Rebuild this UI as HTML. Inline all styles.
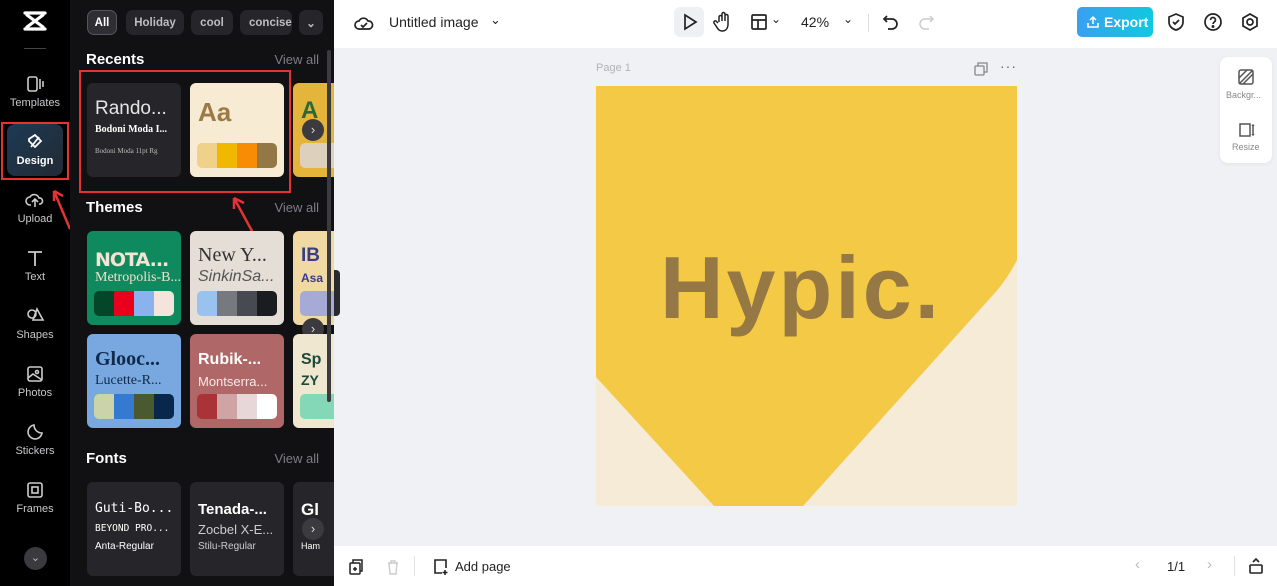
<!DOCTYPE html>
<html><head><meta charset="utf-8"><style>
*{box-sizing:border-box;margin:0;padding:0}
body{width:1277px;height:586px;overflow:hidden;position:relative;font-family:"Liberation Sans",sans-serif;background:#eff1f4}
.a{position:absolute}
.side{left:0;top:0;width:70px;height:586px;background:#000}
.nav{position:absolute;left:0;width:70px;text-align:center;color:#c9c9cc;font-size:11px}
.nav svg{display:block;margin:0 auto 3px}
.panel{left:70px;top:0;width:264px;height:586px;background:#111114;overflow:hidden}
.chip{position:absolute;top:10px;height:25px;border-radius:7px;background:#26262a;color:#bdbdc2;font-size:11.5px;font-weight:bold;display:flex;align-items:center;justify-content:center;white-space:nowrap;overflow:hidden}
.h{position:absolute;left:16px;color:#fff;font-weight:bold;font-size:15px}
.va{position:absolute;right:15px;color:#7d7d84;font-size:13px}
.card{position:absolute;width:94px;height:94px;border-radius:6px;overflow:hidden}
.sw{position:absolute;left:7px;right:7px;top:60px;height:25px;border-radius:5px;overflow:hidden;display:flex}
.sw i{flex:1}
.t1{position:absolute;left:8px;top:18px;font-size:19px;white-space:nowrap}
.t2{position:absolute;left:8px;top:42px;font-size:14px;white-space:nowrap}
.arr{position:absolute;width:22px;height:22px;border-radius:50%;background:#3a3a3f;color:#ddd;font-size:13px;text-align:center;line-height:21px}
.top{left:334px;top:0;width:943px;height:48px;background:#fff}
.bot{left:334px;top:546px;width:943px;height:40px;background:#fff}
</style></head><body>
<div class="a side">
 <svg class="a" style="left:22px;top:9px" width="26" height="24" viewBox="0 0 26 24"><path d="M3 4h20M3 20h20M5 6l16 12M21 6L5 18" fill="none" stroke="#fff" stroke-width="3.2" stroke-linecap="round"/></svg>
 <div class="a" style="left:24px;top:48px;width:22px;height:1px;background:#444"></div>
 <div class="nav" style="top:74px"><svg width="20" height="20" viewBox="0 0 20 20" fill="none" stroke="#ccc" stroke-width="1.6"><rect x="3" y="3" width="9" height="14" rx="2"/><path d="M15 5v10M18 7v6"/></svg>Templates</div>
 <div class="a" style="left:7px;top:124px;width:56px;height:52px;border-radius:8px;background:linear-gradient(135deg,#1d3a55,#222a33)"></div>
 <div class="a" style="left:1px;top:122px;width:68px;height:58px;border:2px solid #e53333"></div>
 <div class="nav" style="top:132px;color:#fff;font-weight:bold"><svg width="20" height="20" viewBox="0 0 20 20" fill="none" stroke="#fff" stroke-width="1.8"><path d="M4 7l6-4 6 6-6 6-6-6zM6 15l8-10"/></svg>Design</div>
 <svg class="a" style="left:48px;top:185px" width="26" height="46"><path d="M22 44L6 6M6 6l0 10M6 6l9 5" stroke="#e53333" stroke-width="2.5" fill="none"/></svg>
 <div class="nav" style="top:190px"><svg width="20" height="20" viewBox="0 0 20 20" fill="none" stroke="#ccc" stroke-width="1.6"><path d="M6 15H5a4 4 0 010-8 5 5 0 019 1 3 3 0 011 6h-1M10 17V9M7 12l3-3 3 3"/></svg>Upload</div>
 <div class="nav" style="top:248px"><svg width="20" height="20" viewBox="0 0 20 20" fill="none" stroke="#ccc" stroke-width="1.8"><path d="M3 4h14M10 4v14"/></svg>Text</div>
 <div class="nav" style="top:306px"><svg width="20" height="20" viewBox="0 0 20 20" fill="none" stroke="#ccc" stroke-width="1.6"><circle cx="7" cy="8" r="4"/><path d="M12 3l6 11H8z"/></svg>Shapes</div>
 <div class="nav" style="top:364px"><svg width="20" height="20" viewBox="0 0 20 20" fill="none" stroke="#ccc" stroke-width="1.6"><rect x="3" y="3" width="14" height="14" rx="2"/><path d="M3 14l5-4 9 6"/><circle cx="12" cy="8" r="1.5"/></svg>Photos</div>
 <div class="nav" style="top:422px"><svg width="20" height="20" viewBox="0 0 20 20" fill="none" stroke="#ccc" stroke-width="1.6"><path d="M17 11a7 7 0 11-8-8c0 4 3 8 8 8z"/></svg>Stickers</div>
 <div class="nav" style="top:480px"><svg width="20" height="20" viewBox="0 0 20 20" fill="none" stroke="#ccc" stroke-width="1.6"><rect x="3" y="3" width="14" height="14" rx="2"/><rect x="7" y="7" width="6" height="6"/></svg>Frames</div>
 <div class="a" style="left:24px;top:547px;width:23px;height:23px;border-radius:50%;background:#3a3a3f;color:#bbb;font-size:11px;text-align:center;line-height:22px">⌄</div>
</div>
<div class="a panel">
 <div class="chip" style="left:17px;width:30px;background:#2e2e33;border:1px solid #55555b;color:#fff">All</div>
 <div class="chip" style="left:56px;width:58px">Holiday</div>
 <div class="chip" style="left:121px;width:42px">cool</div>
 <div class="chip" style="left:170px;width:52px;justify-content:flex-start;padding-left:9px">concise</div>
 <div class="chip" style="left:229px;width:24px">⌄</div>
 <div class="h" style="top:51px">Recents</div><div class="va" style="top:52px">View all</div>
 <div class="card" style="left:17px;top:83px;background:#26262a">
  <div class="t1" style="color:#e5e5e5;font-size:19px;top:15px">Rando...</div>
  <div class="t2" style="color:#fff;font-family:'Liberation Serif',serif;font-weight:bold;font-size:10px;top:41px">Bodoni Moda I...</div>
  <div class="t2" style="color:#bbb;font-family:'Liberation Serif',serif;font-size:7px;top:64px">Bodoni Moda 11pt Rg</div>
 </div>
 <div class="card" style="left:120px;top:83px;background:#f7ebd3">
  <div class="t1" style="color:#9b7a45;font-size:26px;font-weight:bold;top:14px">Aa</div>
  <div class="sw"><i style="background:#f0d18a"></i><i style="background:#f1b800"></i><i style="background:#f88d05"></i><i style="background:#937846"></i></div>
 </div>
 <div class="card" style="left:223px;top:83px;background:#e5b43a"><div class="t1" style="color:#2a6a3a;font-weight:bold;font-size:24px;top:14px">A</div><div class="sw" style="background:#ddd0bd"></div></div>
 <div class="a" style="left:9px;top:70px;width:212px;height:123px;border:2px solid #e53333"></div>
 <svg class="a" style="left:158px;top:192px" width="36" height="54"><path d="M30 50L6 6M6 6l0 11M6 6l10 5" stroke="#e53333" stroke-width="2.5" fill="none"/></svg>
 <div class="arr" style="left:232px;top:119px">›</div>
 <div class="h" style="top:199px">Themes</div><div class="va" style="top:200px">View all</div>
 <div class="card" style="left:17px;top:231px;background:#0f8a5f"><div class="t1" style="color:#f7e3d3;font-weight:bold;font-size:19px;font-family:'DejaVu Sans',sans-serif;letter-spacing:-1px">NOTA...</div><div class="t2" style="color:#f0e0d0;font-family:'Liberation Serif',serif;top:39px">Metropolis-B...</div><div class="sw"><i style="background:#034628"></i><i style="background:#e9001c"></i><i style="background:#8ab2ee"></i><i style="background:#f4e4dc"></i></div></div>
 <div class="card" style="left:120px;top:231px;background:#e4ded6"><div class="t1" style="color:#333;font-family:'Liberation Serif',serif;font-size:20px;top:13px">New Y...</div><div class="t2" style="color:#555;font-style:italic;font-size:16px;top:37px">SinkinSa...</div><div class="sw"><i style="background:#9ac2ee"></i><i style="background:#76797e"></i><i style="background:#474a51"></i><i style="background:#1a1c20"></i></div></div>
 <div class="card" style="left:223px;top:231px;background:#f0d9a3"><div class="t1" style="color:#3b3d83;font-weight:bold;top:14px">IB</div><div class="t2" style="color:#3b3d83;font-weight:bold;font-size:12px;top:40px">Asa</div><div class="sw" style="background:#a6aad6"></div></div>
 <div class="arr" style="left:232px;top:318px">›</div>
 <div class="card" style="left:17px;top:334px;background:#79a8e0"><div class="t1" style="color:#0f2a4a;font-family:'Liberation Serif',serif;font-weight:bold;font-size:20px;top:14px">Glooc...</div><div class="t2" style="color:#0f2a4a;font-family:'Liberation Serif',serif;top:39px">Lucette-R...</div><div class="sw"><i style="background:#cbd4a8"></i><i style="background:#347ad0"></i><i style="background:#4a5a2e"></i><i style="background:#07284a"></i></div></div>
 <div class="card" style="left:120px;top:334px;background:#b06767"><div class="t1" style="color:#fff;font-weight:bold;font-size:16px;top:17px">Rubik-...</div><div class="t2" style="color:#fbe9e9;font-size:13px;top:40px">Montserra...</div><div class="sw"><i style="background:#a93336"></i><i style="background:#cfa4a4"></i><i style="background:#e6d8d8"></i><i style="background:#fff"></i></div></div>
 <div class="card" style="left:223px;top:334px;background:#efe7cf"><div class="t1" style="color:#1a4a3a;font-weight:bold;font-size:16px;top:17px">Sp</div><div class="t2" style="color:#1a4a3a;font-weight:bold;font-size:14px;top:38px">ZY</div><div class="sw" style="background:#84d8b8"></div></div>
 <div class="h" style="top:450px">Fonts</div><div class="va" style="top:451px">View all</div>
 <div class="card" style="left:17px;top:482px;background:#26262a"><div class="t1" style="color:#fff;font-family:'DejaVu Sans Mono',monospace;font-size:13px;top:19px">Guti-Bo...</div><div class="t2" style="color:#fff;font-family:'DejaVu Sans Mono',monospace;font-size:9.5px;top:41px">BEYOND PRO...</div><div class="t2" style="color:#fff;font-size:10px;top:59px">Anta-Regular</div></div>
 <div class="card" style="left:120px;top:482px;background:#26262a"><div class="t1" style="color:#fff;font-weight:bold;font-size:15px;top:19px">Tenada-...</div><div class="t2" style="color:#ccc;font-size:13px;top:40px">Zocbel X-E...</div><div class="t2" style="color:#ccc;font-size:10px;top:59px">Stilu-Regular</div></div>
 <div class="card" style="left:223px;top:482px;background:#26262a"><div class="t1" style="color:#fff;font-weight:bold;font-size:17px;top:18px">Gl</div><div class="t2" style="color:#fff;font-size:9px;top:59px">Ham</div></div>
 <div class="arr" style="left:232px;top:518px">›</div>
 <div class="a" style="left:257px;top:50px;width:4px;height:352px;border-radius:2px;background:#3a3a3f"></div>
</div>
<div class="a" style="left:334px;top:270px;width:6px;height:46px;background:#2a2a2e;border-radius:0 4px 4px 0"></div>
<div class="a top">
 <svg class="a" style="left:20px;top:13px" width="20" height="20" viewBox="0 0 20 20" fill="none" stroke="#222" stroke-width="1.7"><path d="M6 16H5a4 4 0 010-8 5 5 0 019 0 4 4 0 011 8z"/><path d="M7 12l2 2 4-4"/></svg>
 <div class="a" style="left:55px;top:14px;font-size:14px;color:#222">Untitled image</div>
 <div class="a" style="left:156px;top:12px;font-size:13px;color:#222">⌄</div>
 <div class="a" style="left:340px;top:7px;width:30px;height:30px;border-radius:6px;background:#eef0f3"></div>
 <svg class="a" style="left:346px;top:12px" width="20" height="20" viewBox="0 0 20 20" fill="none" stroke="#222" stroke-width="1.7"><path d="M5 3l11 7-11 7z"/></svg>
 <svg class="a" style="left:379px;top:11px" width="20" height="22" viewBox="0 0 20 22" fill="none" stroke="#222" stroke-width="1.5"><path d="M6 11V6a1.5 1.5 0 013 0v4V3a1.5 1.5 0 013 0v7V5a1.5 1.5 0 013 0v8c0 4-2 7-6 7-3 0-4-2-6-5l-2-3a1.5 1.5 0 012-2l2 2"/></svg>
 <svg class="a" style="left:416px;top:13px" width="18" height="18" viewBox="0 0 18 18" fill="none" stroke="#222" stroke-width="1.7"><rect x="2" y="2" width="14" height="14" rx="1"/><path d="M2 7h14M8 7v9"/></svg>
 <div class="a" style="left:437px;top:12px;font-size:12px;color:#222">⌄</div>
 <div class="a" style="left:467px;top:14px;font-size:14px;color:#222">42%</div>
 <div class="a" style="left:509px;top:12px;font-size:12px;color:#222">⌄</div>
 <div class="a" style="left:534px;top:14px;width:1px;height:18px;background:#ddd"></div>
 <svg class="a" style="left:548px;top:13px" width="18" height="18" viewBox="0 0 18 18" fill="none" stroke="#222" stroke-width="1.7"><path d="M5 3L2 6l3 3M2 6h8a5 5 0 010 10H6"/></svg>
 <svg class="a" style="left:583px;top:13px" width="18" height="18" viewBox="0 0 18 18" fill="none" stroke="#ccc" stroke-width="1.5"><path d="M13 3l3 3-3 3M16 6H8a5 5 0 000 10h4"/></svg>
 <div class="a" style="left:743px;top:7px;width:76px;height:30px;border-radius:5px;background:linear-gradient(90deg,#3aa0f0,#10c8e0);color:#fff;font-weight:bold;font-size:14px;line-height:30px;padding-left:27px">Export</div>
 <svg class="a" style="left:752px;top:15px" width="14" height="14" viewBox="0 0 14 14" fill="none" stroke="#fff" stroke-width="1.5"><path d="M7 9V2M4 5l3-3 3 3M2 8v4h10V8"/></svg>
 <svg class="a" style="left:832px;top:12px" width="20" height="20" viewBox="0 0 20 20" fill="none" stroke="#222" stroke-width="1.7"><path d="M10 2l7 3v5c0 4-3 7-7 8-4-1-7-4-7-8V5z"/><path d="M7 10l2 2 4-4"/></svg>
 <svg class="a" style="left:869px;top:12px" width="20" height="20" viewBox="0 0 20 20" fill="none" stroke="#222" stroke-width="1.7"><circle cx="10" cy="10" r="8"/><path d="M7.5 8a2.5 2.5 0 115 0c0 2-2.5 2-2.5 4"/><circle cx="10" cy="14.5" r=".6" fill="#222"/></svg>
 <svg class="a" style="left:906px;top:12px" width="20" height="20" viewBox="0 0 20 20" fill="none" stroke="#222" stroke-width="1.7"><path d="M10 2l7 4v8l-7 4-7-4V6z"/><circle cx="10" cy="10" r="3"/></svg>
</div>
<div class="a" style="left:596px;top:62px;font-size:11px;color:#b0b3b8">Page 1</div>
<svg class="a" style="left:974px;top:62px" width="14" height="14" viewBox="0 0 14 14" fill="none" stroke="#888" stroke-width="1.3"><rect x="1" y="4" width="9" height="9" rx="1"/><path d="M4 4V1h9v9h-3"/></svg>
<div class="a" style="left:1000px;top:58px;font-size:14px;color:#666;letter-spacing:1px">···</div>
<svg class="a" style="left:596px;top:86px" width="421" height="420" viewBox="0 0 421 420">
 <rect width="421" height="420" fill="#f5ebd6"/>
 <path d="M0 0H421V174Q410 195 397 209L207 420H118L0 291Z" fill="#f4c945"/>
 <text x="64" y="232" font-family="Liberation Sans" font-weight="bold" font-size="88" fill="#957843" letter-spacing="3">Hypic.</text>
</svg>
<div class="a" style="left:1220px;top:57px;width:52px;height:106px;background:#fff;border-radius:8px;box-shadow:0 1px 4px rgba(0,0,0,.06)"></div>
<svg class="a" style="left:1237px;top:68px" width="18" height="18" viewBox="0 0 18 18" fill="none" stroke="#555" stroke-width="1.5"><rect x="2" y="2" width="14" height="14" rx="2"/><path d="M2 10l8-8M6 16l10-10M2 16l14-14"/></svg>
<div class="a" style="left:1226px;top:90px;font-size:9px;color:#888">Backgr...</div>
<svg class="a" style="left:1237px;top:121px" width="18" height="18" viewBox="0 0 18 18" fill="none" stroke="#555" stroke-width="1.5"><path d="M3 3h10v12H3zM16 4v10M15 5l1-1 1 1M15 13l1 1 1-1"/></svg>
<div class="a" style="left:1232px;top:142px;font-size:9px;color:#888">Resize</div>
<div class="a bot">
 <svg class="a" style="left:14px;top:13px" width="16" height="16" viewBox="0 0 16 16" fill="none" stroke="#222" stroke-width="1.5"><rect x="2" y="4" width="10" height="11" rx="1"/><path d="M5 4V1h9v11h-2"/><path d="M7 8v4M5 10h4"/></svg>
 <svg class="a" style="left:52px;top:13px" width="14" height="16" viewBox="0 0 14 16" fill="none" stroke="#ccc" stroke-width="1.4"><path d="M2 4h10M5 4V2h4v2M3 4l1 11h6l1-11"/></svg>
 <div class="a" style="left:80px;top:10px;width:1px;height:20px;background:#e2e2e2"></div>
 <svg class="a" style="left:99px;top:12px" width="16" height="18" viewBox="0 0 16 18" fill="none" stroke="#222" stroke-width="1.6"><path d="M9 15H2V2h11v8M12 12v5M9.5 14.5h5"/></svg>
 <div class="a" style="left:121px;top:13px;font-size:13px;color:#222">Add page</div>
 <div class="a" style="left:801px;top:10px;font-size:15px;color:#bbb">‹</div>
 <div class="a" style="left:833px;top:13px;font-size:13px;color:#222">1/1</div>
 <div class="a" style="left:873px;top:10px;font-size:15px;color:#bbb">›</div>
 <div class="a" style="left:900px;top:10px;width:1px;height:20px;background:#e2e2e2"></div>
 <svg class="a" style="left:914px;top:11px" width="16" height="18" viewBox="0 0 16 18" fill="none" stroke="#222" stroke-width="1.6"><rect x="2" y="8" width="12" height="8" rx="1"/><path d="M5 5l3-3 3 3"/></svg>
</div>
</body></html>
